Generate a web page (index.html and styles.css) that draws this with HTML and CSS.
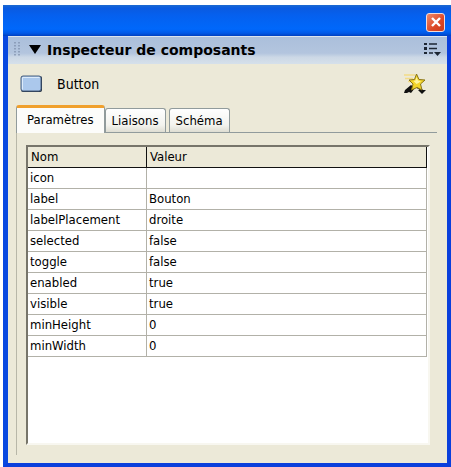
FILE: index.html
```html
<!DOCTYPE html>
<html lang="fr">
<head>
    <meta charset="UTF-8">
    <meta name="viewport" content="width=device-width, initial-scale=1.0">
    <title>Inspecteur de composants</title>
    <link rel="stylesheet" href="styles.css">
</head>
<body>
    <div class="window">
        <div class="titlebar">
            <button type="button" class="close" aria-label="Fermer">
                <svg width="12" height="12" viewBox="0 0 12 12">
                    <path d="M2 2l8 8M10 2l-8 8" stroke="#fff" stroke-width="2.4"/>
                </svg>
            </button>
        </div>

        <div class="content">
            <div class="panel-header">
                <svg class="grip" width="6" height="15" viewBox="0 0 6 15">
                    <path d="M1 0v15M5 0v15" stroke="#7f90ac" stroke-width="1.4" stroke-dasharray="1.5 1.5"/>
                </svg>
                <svg width="12" height="9" viewBox="0 0 12 9">
                    <path d="M0 0h12L6 9z" fill="#000"/>
                </svg>
                <h1>Inspecteur de composants</h1>
                <button type="button" class="icon-button" aria-label="Options">
                    <svg width="17" height="15" viewBox="0 0 17 15">
                        <path d="M0 1h3v2H0zM0 5h3v3H0zM0 10h3v2H0z" fill="#1d2633"/>
                        <path d="M5 2h8M5 6.5h8M5 11h4" stroke="#1d2633" stroke-width="1.3"/>
                        <path d="M10 10h7l-3.5 4z" fill="#1d2633"/>
                    </svg>
                </button>
            </div>

            <div class="component">
                <svg width="23" height="18" viewBox="0 0 23 18">
                    <rect x="1" y="1" width="21" height="16" rx="2" fill="#1e2c40"/>
                    <rect x="1" y="1" width="20" height="15" rx="2" fill="#abc8ec" stroke="#4a617f"/>
                    <path d="M2.5 14.5v-12h17" fill="none" stroke="#dcebfb"/>
                </svg>
                <span class="component-name">Button</span>
                <button type="button" class="icon-button" aria-label="Assistant">
                    <svg width="24" height="24" viewBox="0 0 24 24">
                        <path d="M1 3h11M2 6.5h8M5 9.5h4" stroke="#f2dc86" stroke-width="1.5"/>
                        <path d="M1 21l1-3 6-5 4 3-4 5-2-1-2 1z" fill="#111"/>
                        <path d="M15 18h8l-4 4z" fill="#111"/>
                        <path d="M14 15l6 4" stroke="#111" stroke-width="2"/>
                        <path d="M13.5 2l2.5 5.500 6 .5-4.500 4 1.500 6-5-2.500-5.500 2.500 1.500-6-4-4 5.500-.5z" fill="#f3d52a" stroke="#8a7414"/>
                        <path d="M13.5 5l1.500 3.500 3 .5-2.500 2-2 1-3-3 2-.5z" fill="#fff59a"/>
                    </svg>
                </button>
            </div>

            <div class="tabs" role="tablist">
                <button type="button" class="tab active" role="tab" id="tab-params" aria-selected="true" aria-controls="panel-params">Paramètres</button>
                <button type="button" class="tab" role="tab" aria-selected="false">Liaisons</button>
                <button type="button" class="tab" role="tab" aria-selected="false">Schéma</button>
            </div>

            <div class="tab-panel" role="tabpanel" id="panel-params" aria-labelledby="tab-params">
                <div class="list">
                    <table>
                        <thead>
                            <tr><th class="name" scope="col">Nom</th><th scope="col">Valeur</th></tr>
                        </thead>
                        <tbody>
                            <tr><td>icon</td><td></td></tr>
                            <tr><td>label</td><td>Bouton</td></tr>
                            <tr><td>labelPlacement</td><td>droite</td></tr>
                            <tr><td>selected</td><td>false</td></tr>
                            <tr><td>toggle</td><td>false</td></tr>
                            <tr><td>enabled</td><td>true</td></tr>
                            <tr><td>visible</td><td>true</td></tr>
                            <tr><td>minHeight</td><td>0</td></tr>
                            <tr><td>minWidth</td><td>0</td></tr>
                        </tbody>
                    </table>
                </div>
            </div>
        </div>
    </div>
</body>
</html>
```
FILE: styles.css
```css
* {
    box-sizing: border-box;
}

body {
    margin: 0;
    background-color: #fff;
    color: #000;
    font-family: "DejaVu Sans Condensed", "DejaVu Sans", sans-serif;
    font-size: 13px;
}

button {
    font: inherit;
    color: inherit;
}

svg {
    display: block;
}

/* Window frame */
.window {
    display: flex;
    flex-direction: column;
    min-height: 100vh;
    padding: 5px 0 0 3px;
}

.titlebar {
    display: flex;
    justify-content: flex-end;
    align-items: center;
    height: 31px;
    padding: 3px 6px 0 0;
    background: linear-gradient(#1c6ad0, #0a5ae0 3px, #0560ee 10px, #0068fb 24px, #0059e8 28px, #0040c0);
}

.close {
    display: flex;
    justify-content: center;
    align-items: center;
    width: 19px;
    height: 19px;
    padding: 0;
    border: 1px solid #f4dcd8;
    border-radius: 3px;
    background: linear-gradient(135deg, #ee8a6c, #dc4826 60%, #c83c1c);
}

.content {
    display: flex;
    flex-direction: column;
    flex: 1;
    border: solid #0a3fdc;
    border-width: 0 4px 4px 5px;
    border-left-color: #0848e0;
    background-color: #ece9d8;
}

/* Panel header */
.panel-header {
    display: flex;
    align-items: center;
    height: 28px;
    padding: 0 6px 2px;
    border-top: 1px solid #dce4ee;
    background: linear-gradient(#abbfdb, #b3c5de 60%, #ccd8e6 75%, #d6e0ea);
}

.grip {
    margin-right: 9px;
}

.panel-header h1 {
    flex: 1;
    margin: 0 0 0 6px;
    font-family: "DejaVu Sans", sans-serif;
    font-size: 14px;
    font-weight: bold;
    line-height: 18px;
}

.icon-button {
    padding: 0;
    border: none;
    background: none;
}

/* Selected component */
.component {
    display: flex;
    align-items: center;
    height: 41px;
    padding: 0 20px 2px 12px;
}

.component-name {
    flex: 1;
    margin-left: 14px;
    font-size: 14px;
}

/* Tabs */
.tabs {
    display: flex;
    align-items: flex-end;
    height: 28px;
    margin: 0 10px 0 8px;
    border-bottom: 1px solid #919b9c;
}

.tab {
    height: 24px;
    margin-right: 3px;
    padding: 0 6px;
    border: 1px solid #919b9c;
    border-bottom: none;
    border-radius: 3px 3px 0 0;
    background: linear-gradient(#fff, #f3f3ee 70%, #deddd2);
    line-height: 18px;
}

.tab.active {
    height: 28px;
    margin: 0 0 -1px;
    padding: 0 10px 2px;
    border-top: 3px solid #f0a02c;
    background: #fcfcfa;
}

.tab-panel {
    display: flex;
    flex: 1;
    margin: 0 10px 8px 8px;
    padding: 12px 7px 10px 9px;
    border-left: 1px solid #b8b7a8;
}

/* Parameter list */
.list {
    flex: 1;
    padding-right: 1px;
    border: 2px solid #f8f7f0;
    border-top-color: #77756a;
    border-left-color: #77756a;
    background-color: #fff;
}

table {
    width: 100%;
    table-layout: fixed;
    border-collapse: separate;
    border-spacing: 0;
}

th,
td {
    height: 21px;
    padding: 0 2px;
    border: solid #b2b1a8;
    border-width: 0 1px 1px 0;
    line-height: 18px;
    text-align: left;
}

th {
    padding: 0 3px;
    border-color: #111;
    background-color: #ece9d8;
    font-weight: normal;
}

.name {
    width: 119px;
}
```
